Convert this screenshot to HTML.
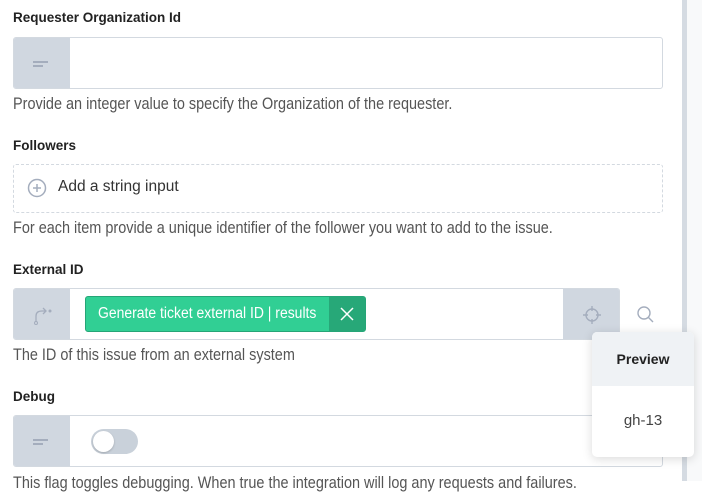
<!DOCTYPE html>
<html><head><meta charset="utf-8"><style>
*{box-sizing:border-box;margin:0;padding:0}
body{width:702px;height:481px;overflow:hidden;background:#fff;font-family:"Liberation Sans",sans-serif;position:relative;color:#222}
.a{position:absolute}
.lbl{font-size:13.5px;font-weight:bold;color:#222;left:13px;white-space:nowrap}
.desc{color:#555;left:13px;white-space:nowrap;transform:scaleX(0.85);transform-origin:left top;font-size:17px}
.box{left:13px;width:650px;border:1px solid #d3d9e0;border-radius:3px;background:#fff;overflow:hidden}
.cell{position:absolute;top:0;bottom:0;width:56px;background:#d0d7e0}
.lines{position:absolute;left:19px;top:23px;width:16px;height:6px}
.lines:before{content:"";position:absolute;left:0;top:0;width:15px;height:2px;background:#a4adbd}
.lines:after{content:"";position:absolute;left:0;top:4px;width:10px;height:2px;background:#a4adbd}
</style></head><body>
<div class="a" style="left:682px;top:0;width:5px;height:481px;background:#d5dbe2"></div>
<div class="a" style="left:687px;top:0;width:15px;height:481px;background:#f8f9fa"></div>
<div class="a lbl" style="top:10px">Requester Organization Id</div>
<div class="a box" style="top:37px;height:52px"><div class="cell" style="left:0"><div class="lines"></div></div></div>
<div class="a desc" style="top:94px">Provide an integer value to specify the Organization of the requester.</div>
<div class="a lbl" style="top:138px">Followers</div>
<div class="a box" style="top:164px;height:49px;border:1px dashed #d3d9e0"></div>
<svg class="a" style="left:27px;top:178px" width="20" height="20"><circle cx="10" cy="10" r="8.5" fill="none" stroke="#a4adbd" stroke-width="1.5"/><path d="M10 6v8M6 10h8" stroke="#a4adbd" stroke-width="1.5"/></svg>
<div class="a" style="left:58px;top:178px;font-size:15.5px;color:#333;white-space:nowrap">Add a string input</div>
<div class="a desc" style="top:218px">For each item provide a unique identifier of the follower you want to add to the issue.</div>
<div class="a lbl" style="top:262px">External ID</div>
<div class="a box" style="top:288px;height:52px;width:607px">
<div class="cell" style="left:0"><svg class="a" style="left:17px;top:17px" width="22" height="20"><path d="M5 16V10Q5 5 11 5H15M12 2l3 3-3 3" fill="none" stroke="#a4adbd" stroke-width="1.3"/><circle cx="5" cy="17" r="1.5" fill="none" stroke="#a4adbd"/><circle cx="19" cy="5" r="1.5" fill="#a4adbd"/></svg></div>
<div class="cell" style="right:0"><svg class="a" style="left:19px;top:16px" width="20" height="20"><circle cx="10" cy="10" r="6" fill="none" stroke="#a4adbd" stroke-width="1.4"/><path d="M10 1v5M10 14v5M1 10h5M14 10h5" stroke="#a4adbd" stroke-width="1.4"/></svg></div>
</div>
<div class="a" style="left:85px;top:296px;width:281px;height:36px;border-radius:3px;background:#31cf94;border:1px solid #26a577;overflow:hidden">
<div class="a" style="left:12px;top:8px;font-size:15.5px;color:#fff;white-space:nowrap;transform:scaleX(0.9);transform-origin:left top">Generate ticket external ID | results</div>
<div class="a" style="right:0;top:0;width:36px;height:36px;background:#27a878"><svg class="a" style="left:11px;top:10px" width="14" height="14"><path d="M1 1l12 12M13 1L1 13" stroke="#fff" stroke-width="1.5"/></svg></div>
</div>
<svg class="a" style="left:636px;top:305px" width="20" height="20"><circle cx="8" cy="8" r="6" fill="none" stroke="#a4adbd" stroke-width="1.4"/><path d="M12.5 12.5l4.5 4.5" stroke="#a4adbd" stroke-width="1.4"/></svg>
<div class="a desc" style="top:345px">The ID of this issue from an external system</div>
<div class="a lbl" style="top:389px">Debug</div>
<div class="a box" style="top:415px;height:52px"><div class="cell" style="left:0"><div class="lines"></div></div>
<div class="a" style="left:77px;top:13px;width:47px;height:25px;border-radius:13px;background:#c9d1da"><div class="a" style="left:2px;top:2px;width:21px;height:21px;border-radius:50%;background:#fff;box-shadow:0 1px 2px rgba(0,0,0,.2)"></div></div></div>
<div class="a desc" style="top:473px">This flag toggles debugging. When true the integration will log any requests and failures.</div>
<div class="a" style="left:592px;top:332px;width:102px;height:125px;background:#fff;border-radius:5px;box-shadow:0 2px 10px rgba(0,0,0,.15);overflow:hidden">
<div style="height:54px;background:#eff2f5;font-size:14px;font-weight:bold;text-align:center;line-height:54px;color:#222">Preview</div>
<div style="text-align:center;font-size:15px;color:#444;margin-top:26px">gh-13</div>
</div>
</body></html>
